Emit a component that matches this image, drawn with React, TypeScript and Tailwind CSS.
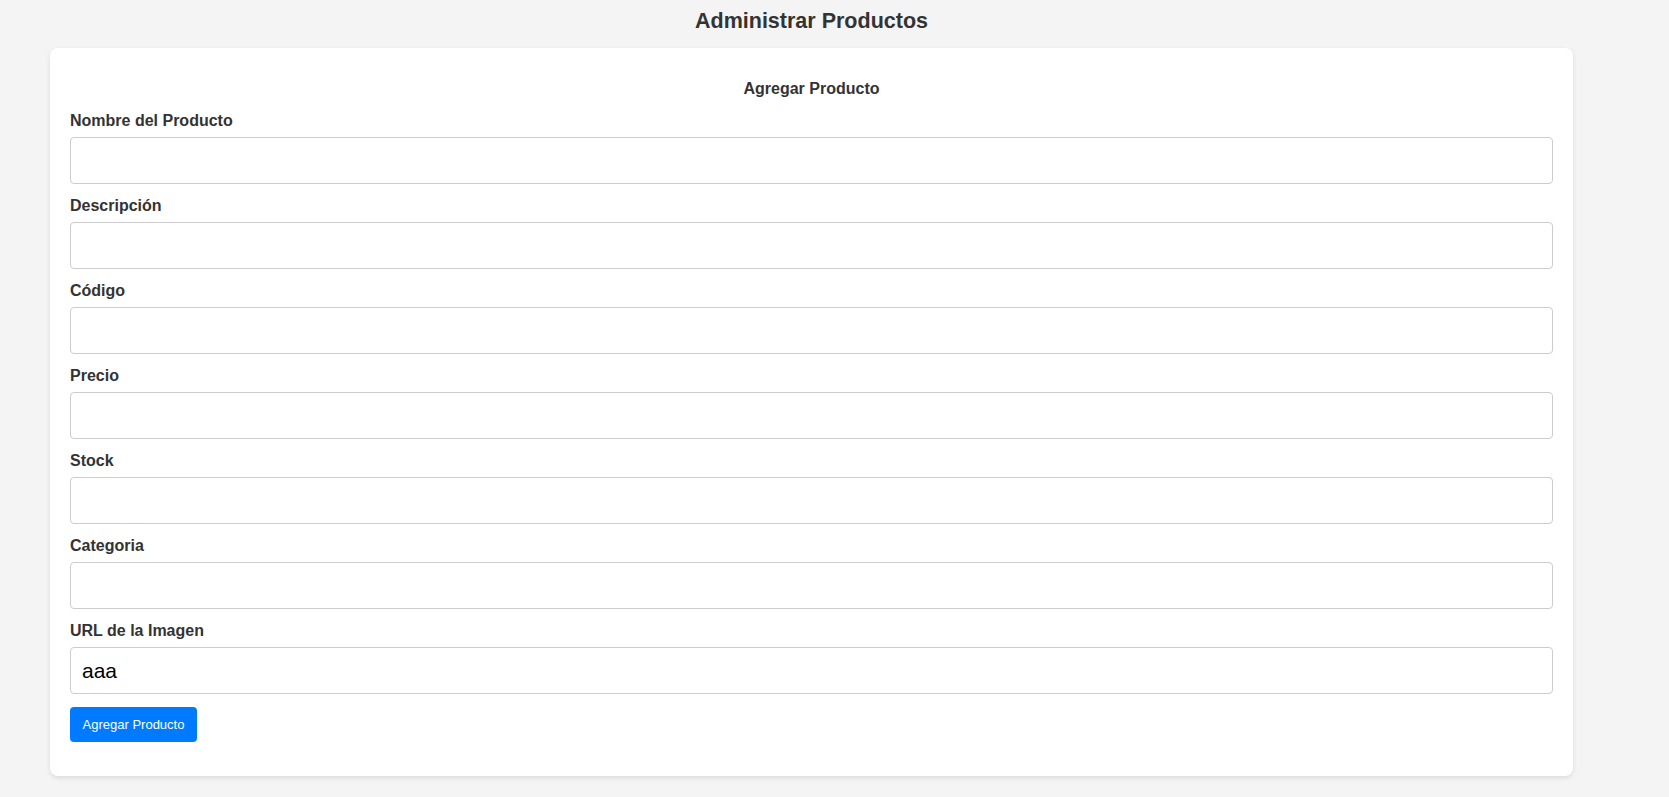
import { useState } from 'react';

const fields = [
    { name: 'nombre', label: 'Nombre del Producto' },
    { name: 'descripcion', label: 'Descripción' },
    { name: 'codigo', label: 'Código' },
    { name: 'precio', label: 'Precio' },
    { name: 'stock', label: 'Stock' },
    { name: 'categoria', label: 'Categoria' },
    { name: 'imagen', label: 'URL de la Imagen' },
];

function App() {
    const [values, setValues] = useState<Record<string, string>>({ imagen: 'aaa' });

    return (
        <div className="min-h-screen bg-[#f4f4f4] text-[#333] font-['Liberation_Sans',Arial,sans-serif]">
            <div className="w-[1523px] ml-[50px] pt-[9px] pb-[21px]">
                <h2 className="text-center text-[21.5px] leading-[24px] font-bold">Administrar Productos</h2>

                <div className="mt-[15px] bg-white rounded-lg shadow-[0_2px_5px_rgba(0,0,0,0.1)] px-5 pt-8 pb-[34px]">
                    <h3 className="text-center text-base leading-[18px] font-bold">Agregar Producto</h3>

                    <form className="mt-[13px]" onSubmit={(e) => e.preventDefault()}>
                        {fields.map((f) => (
                            <div key={f.name} className="mb-3">
                                <label htmlFor={f.name} className="block pt-[1px] text-base leading-[18px] font-bold">
                                    {f.label}
                                </label>
                                <input
                                    id={f.name}
                                    type="text"
                                    value={values[f.name] ?? ''}
                                    onChange={(e) => setValues({ ...values, [f.name]: e.target.value })}
                                    className="mt-[7px] block w-full h-[47px] px-[11px] border border-[#ccc] rounded text-[21px] text-black outline-none"
                                />
                            </div>
                        ))}

                        <button
                            type="submit"
                            className="mt-[1px] w-[127px] h-[35px] bg-[#007bff] text-white text-[13px] rounded"
                        >
                            Agregar Producto
                        </button>
                    </form>
                </div>
            </div>
        </div>
    );
}

export default App;
